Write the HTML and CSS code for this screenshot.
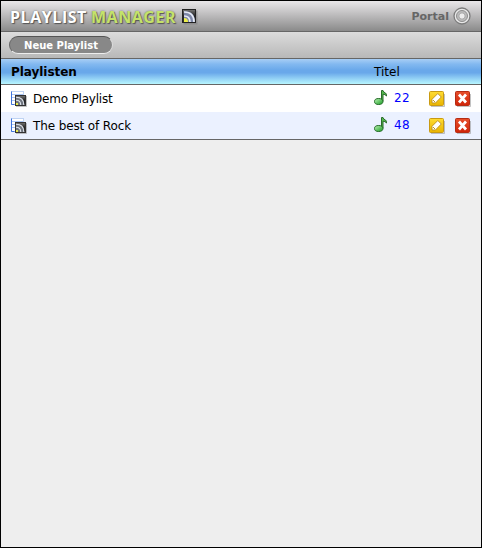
FILE: index.html
```html
<!DOCTYPE html>
<html lang="de">
<head>
<meta charset="utf-8">
<title>Playlist Manager</title>
<link rel="stylesheet" href="styles.css">
</head>
<body>
<svg class="defs" width="0" height="0" aria-hidden="true">
  <defs>
    <linearGradient id="dark" x1="0" y1="0" x2="0" y2="1"><stop offset="0" stop-color="#777"/><stop offset=".5" stop-color="#222"/><stop offset="1" stop-color="#333"/></linearGradient>
    <linearGradient id="green" x1="0" y1="0" x2="1" y2="1"><stop offset="0" stop-color="#c0f5b8"/><stop offset="1" stop-color="#159a20"/></linearGradient>
    <linearGradient id="yellow" x1="0" y1="0" x2="0" y2="1"><stop offset="0" stop-color="#ffdc32"/><stop offset="1" stop-color="#e9b400"/></linearGradient>
    <linearGradient id="red" x1="0" y1="0" x2="0" y2="1"><stop offset="0" stop-color="#e8502c"/><stop offset="1" stop-color="#cf2408"/></linearGradient>
    <symbol id="list" viewBox="0 0 16 16">
      <rect x=".5" y=".5" width="12" height="13" fill="#fff" stroke="#bfd3f3"/>
      <path d="M.5 .5v13h3" stroke="#3f74dc" fill="none"/>
      <path d="M1 3.500h11M1 6.500h3M1 9.500h3" stroke="#a9c5f5"/>
      <path d="M5 15.500h10.500V5" stroke="#888" opacity=".5" fill="none"/>
      <rect x="4.500" y="4.500" width="10" height="10" fill="url(#dark)" stroke="#333"/>
      <path d="M5 5.500q8.500 0 8.500 8.500H5z" fill="#70767f"/>
      <path d="M5 6.200q7.800 0 7.800 7.800M5 9.300q4.700 0 4.700 4.700" fill="none" stroke="#dfe3eb" stroke-width="1.100"/>
      <rect x="5" y="12" width="2" height="2" fill="#e5e94b"/>
    </symbol>
    <symbol id="note" viewBox="0 0 16 16">
      <path d="M7.500 11V.5H9q.5 2 2.500 2.500 1.300 1 1 3-1.300-1.800-3.500-1.800V11.500" fill="#55b94d" stroke="#2b6b2c"/>
      <ellipse cx="4.700" cy="11.500" rx="4.200" ry="3" fill="url(#green)" stroke="#246b28"/>
    </symbol>
    <symbol id="edit" viewBox="0 0 16 16">
      <path d="M2 15.500h13.500V3" fill="none" stroke="#999" opacity=".6"/>
      <rect x=".5" y=".5" width="14" height="14" rx="1" fill="url(#yellow)" stroke="#c99a12"/>
      <path d="M3 12V8.300L8.800 2.500l3.500 3.500L6.500 12z" fill="#fff" stroke="#c29520"/>
      <path d="M4 9l2 2" stroke="#c29520"/>
    </symbol>
    <symbol id="delete" viewBox="0 0 16 16">
      <path d="M2 15.500h13.500V3" fill="none" stroke="#999" opacity=".6"/>
      <rect x=".5" y=".5" width="14" height="14" rx="1" fill="url(#red)" stroke="#b52c14"/>
      <path d="M4 3.500l7 8M11 3.500l-7 8" stroke="#fff" stroke-width="2.700"/>
    </symbol>
  </defs>
</svg>
<div class="app">
  <header class="header">
    <h1 class="logo"><span class="word">PLAYLIST</span><span class="word word-green">MANAGER</span></h1>
    <svg class="feed" width="16" height="16" viewBox="0 0 16 16">
      <rect x="1.500" y="1.500" width="14" height="14" fill="#777" opacity=".5"/>
      <rect x=".5" y=".5" width="13" height="13" fill="url(#dark)" stroke="#222"/>
      <path d="M2 2q11 0 11 11H2z" fill="#7e88a8"/>
      <path d="M2 3q10 0 10 10M2 7q6 0 6 6" fill="none" stroke="#e6eaf6" stroke-width="1.700"/>
      <path d="M2 9q4 0 4 4H2z" fill="#eef04a"/>
    </svg>
    <a class="portal"><span class="portal-label">Portal</span>
      <svg width="18" height="18" viewBox="0 0 18 18"><circle cx="9" cy="9" r="8" fill="#e9e9e9" stroke="#7c7c7c" stroke-width="1.300"/><circle cx="9" cy="9" r="5.500" fill="#bdbdbd" stroke="#8e8e8e"/><circle cx="9" cy="9" r="3.200" fill="#ededed" stroke="#a5a5a5"/></svg>
    </a>
  </header>
  <nav class="toolbar"><a class="button">Neue Playlist</a></nav>
  <main class="list">
    <div class="row head"><span class="name">Playlisten</span><span>Titel</span></div>
    <div class="row">
      <svg class="icon"><use href="#list"/></svg><span class="name tight">Demo Playlist</span>
      <svg class="icon note"><use href="#note"/></svg><span class="count">22</span>
      <svg class="icon edit"><use href="#edit"/></svg><svg class="icon"><use href="#delete"/></svg>
    </div>
    <div class="row alt">
      <svg class="icon"><use href="#list"/></svg><span class="name">The best of Rock</span>
      <svg class="icon note"><use href="#note"/></svg><span class="count">48</span>
      <svg class="icon edit"><use href="#edit"/></svg><svg class="icon"><use href="#delete"/></svg>
    </div>
  </main>
</div>
</body>
</html>
```
FILE: styles.css
```css
* { box-sizing: border-box; }
body { margin: 0; font: 12px/16px "DejaVu Sans", Verdana, sans-serif; color: #000; }
.defs { position: absolute; }
.app { height: 548px; border: 1px solid #000; background: #eee; }
.header { display: flex; align-items: center; height: 31px; padding: 1px 10px 0 9px; border-bottom: 1px solid #666; background: linear-gradient(#e9e7e9, #8a8a8a); }
.logo { display: flex; gap: 4px; margin: 0; width: 166px; font: bold 16px/22px "Open Sans", sans-serif; letter-spacing: .55px; white-space: nowrap; }
.word { color: #fff; text-shadow: 1px 1px 1px #555, 0 0 2px #777; }
.word-green { color: #c4e26a; }
.feed { margin-left: 6px; }
.portal { display: flex; align-items: center; gap: 4px; margin-left: auto; color: #666; font-size: 11px; font-weight: bold; }
.portal svg { margin-top: -1px; }
.toolbar { height: 27px; padding: 4px 8px; border-bottom: 1px solid #666; background: linear-gradient(#dcdcdc, #b8b8b8); }
.button { display: block; width: 104px; height: 18px; border-radius: 9px; border: 1px solid; border-color: #555 #ddd #eee #666; background: #888; color: #fff; font-size: 10px; font-weight: bold; line-height: 17px; text-align: center; }
.list { border-bottom: 1px solid #666; }
.row { display: flex; align-items: center; height: 27px; padding: 0 10px; background: #fff; }
.alt { background: #ebf1ff; }
.alt .name { letter-spacing: -.12px; }
.head { height: 26px; border-bottom: 1px solid #666; background: linear-gradient(#a8cef5 0, #83b9f0 20%, #69a8ea 45%, #69a8ea 55%, #b8f6ff 100%); }
.head .name { width: 363px; font-weight: bold; letter-spacing: -.05px; }
.icon { width: 16px; height: 16px; flex: none; }
.note { margin-top: -1px; }
.row .icon + .name { width: 347px; flex: none; padding-left: 6px; }
.tight { letter-spacing: -.2px; }
.count { width: 34px; flex: none; margin-top: -2px; padding-left: 4px; color: #00f; letter-spacing: .4px; }
.edit { margin-left: 5px; margin-right: 10px; }
```
